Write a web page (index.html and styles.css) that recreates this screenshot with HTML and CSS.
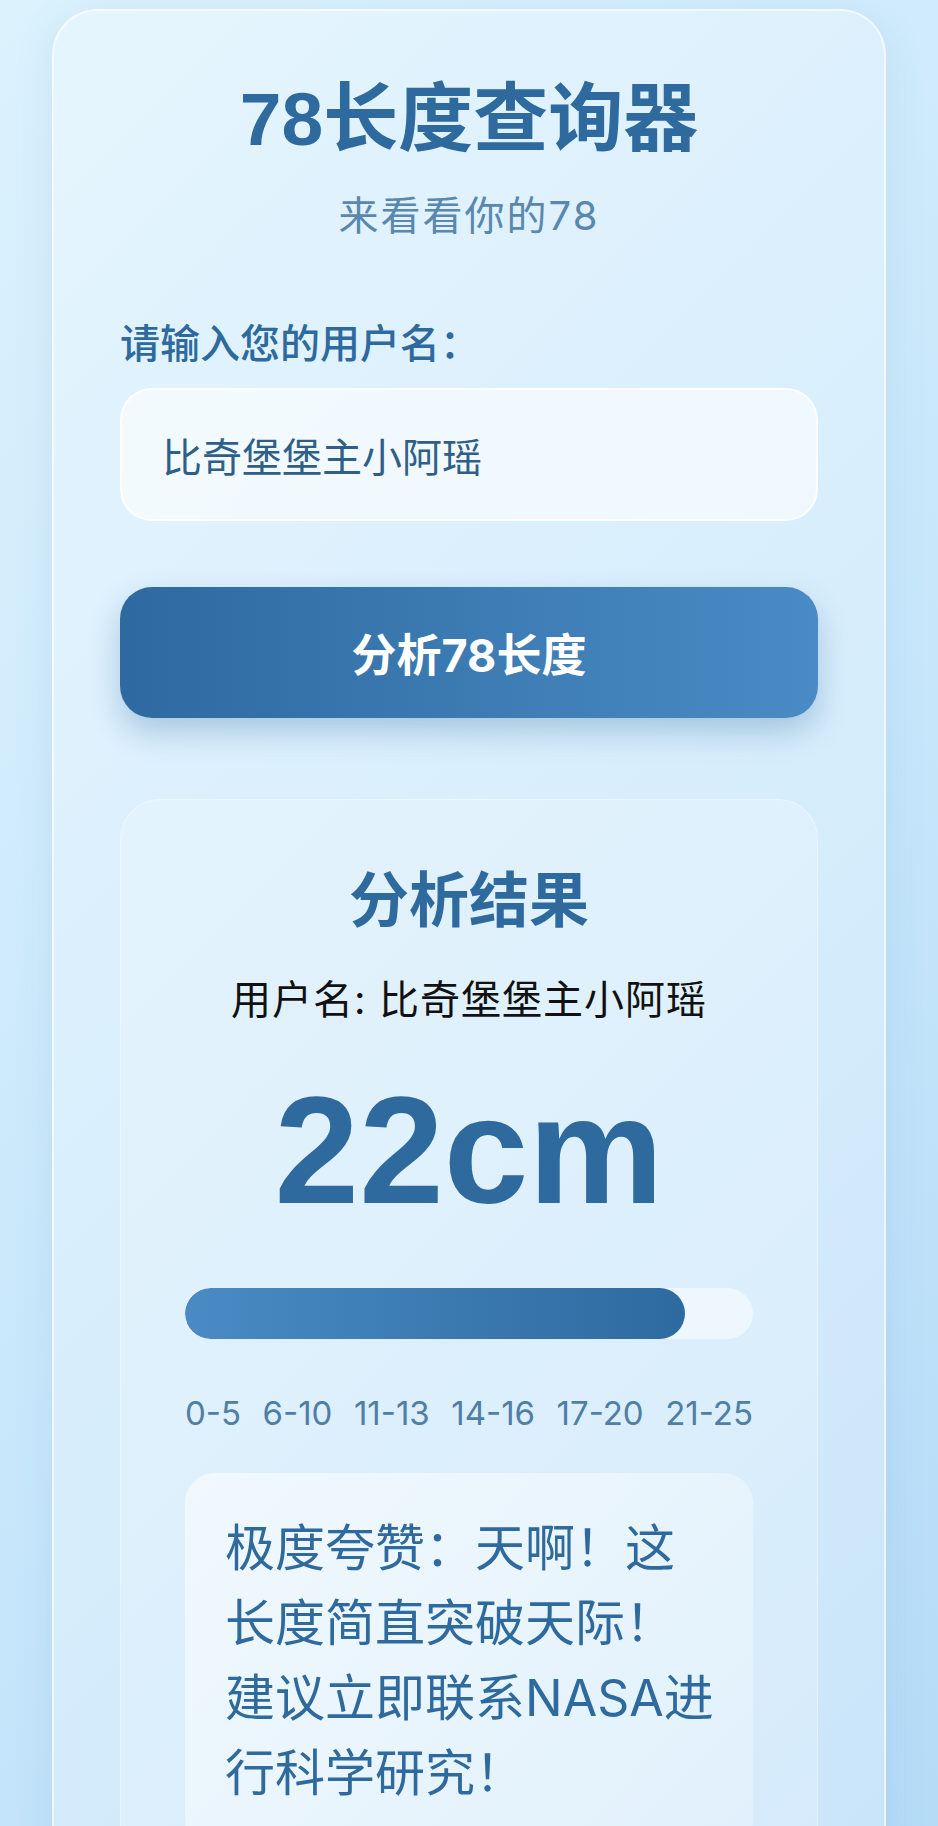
FILE: index.html
```html
<!DOCTYPE html>
<html lang="zh-CN">
<head>
    <meta charset="UTF-8">
    <meta name="viewport" content="width=device-width, initial-scale=1.0">
    <title>78长度查询器</title>
    <link rel="stylesheet" href="styles.css">
</head>
<body>
    <div class="card">
        <h1 class="title">78长度查询器</h1>
        <p class="subtitle">来看看你的78</p>

        <form class="form" id="lengthForm">
            <label class="label" for="username">请输入您的用户名：</label>
            <input class="input" type="text" id="username" value="比奇堡堡主小阿瑶">
            <button type="submit" class="btn">分析78长度</button>
        </form>

        <div class="result">
            <h2>分析结果</h2>
            <p class="user">用户名: 比奇堡堡主小阿瑶</p>
            <div class="length">22cm</div>
            <div class="bar">
                <div class="bar-fill" style="width: 88%"></div>
            </div>
            <div class="scale">
                <span>0-5</span>
                <span>6-10</span>
                <span>11-13</span>
                <span>14-16</span>
                <span>17-20</span>
                <span>21-25</span>
            </div>
            <div class="message">极度夸赞：天啊！这长度简直突破天际！建议立即联系NASA进行科学研究！</div>
        </div>
    </div>
</body>
</html>
```

FILE: styles.css
```css
html {
    min-height: 100%;
    background: linear-gradient(135deg, #dcf2fd 0%, #c8e7fb 50%, #b2d9f7 100%);
}
body {
    margin: 0;
    padding: 9px 52px 60px;
    font-family: "Inter", "Noto Sans CJK SC", sans-serif;
}
.card {
    background: rgba(255, 255, 255, 0.28);
    border: 2px solid rgba(255, 255, 255, 0.6);
    border-radius: 46px;
    padding: 63px 66px 66px;
    box-shadow: 0 8px 40px rgba(70, 130, 180, 0.12);
}
.title {
    margin: 0;
    font-family: "Liberation Sans", "Noto Sans CJK SC", sans-serif;
    font-size: 75px;
    line-height: 90px;
    font-weight: 700;
    color: #2e6a9e;
    text-align: center;
}
.subtitle {
    margin: 24px 0 0;
    font-size: 40px;
    line-height: 56px;
    letter-spacing: 2px;
    color: #5a87ad;
    text-align: center;
}
.form {
    margin-top: 72px;
}
.label {
    display: block;
    font-size: 40px;
    line-height: 56px;
    font-weight: 500;
    color: #2e6a9e;
}
.input {
    display: block;
    width: 100%;
    height: 133px;
    margin-top: 16px;
    padding: 0 40px;
    box-sizing: border-box;
    font-family: inherit;
    font-size: 40px;
    color: #2f5f88;
    background: rgba(255, 255, 255, 0.6);
    border: 2px solid rgba(255, 255, 255, 0.85);
    border-radius: 32px;
    outline: none;
}
.btn {
    display: block;
    width: 100%;
    height: 131px;
    margin-top: 66px;
    border: none;
    border-radius: 32px;
    background: linear-gradient(90deg, #2e6aa0, #4a8bc5);
    color: #fff;
    font-family: inherit;
    font-size: 45px;
    font-weight: 700;
    box-shadow: 0 14px 30px rgba(46, 106, 158, 0.3);
    cursor: pointer;
}
.result {
    margin-top: 81px;
    padding: 64px;
    border: 1px solid rgba(255, 255, 255, 0.35);
    border-radius: 40px;
    background: rgba(255, 255, 255, 0.22);
    text-align: center;
}
.result h2 {
    margin: 0;
    font-size: 60px;
    line-height: 72px;
    font-weight: 700;
    color: #2e6a9e;
}
.user {
    margin: 36px 0 0;
    font-size: 40px;
    line-height: 56px;
    letter-spacing: 1px;
    color: #111;
}
.length {
    margin-top: 46px;
    font-family: "Liberation Sans", Arial, sans-serif;
    font-size: 152px;
    line-height: 152px;
    font-weight: 700;
    color: #2e6a9e;
}
.bar {
    height: 51px;
    margin-top: 62px;
    border-radius: 26px;
    background: rgba(255, 255, 255, 0.5);
    overflow: hidden;
}
.bar-fill {
    height: 100%;
    border-radius: 26px;
    background: linear-gradient(90deg, #4a8bc5, #2d6a9f);
}
.scale {
    display: flex;
    justify-content: space-between;
    margin-top: 54px;
    font-size: 33px;
    line-height: 40px;
    color: #4f7ea6;
}
.message {
    margin-top: 40px;
    padding: 38px 36px 40px 40px;
    border-radius: 30px;
    background: linear-gradient(135deg, rgba(255, 255, 255, 0.55), rgba(255, 255, 255, 0.25));
    text-align: left;
    font-size: 50px;
    line-height: 75px;
    color: #2e6a9e;
}
```
